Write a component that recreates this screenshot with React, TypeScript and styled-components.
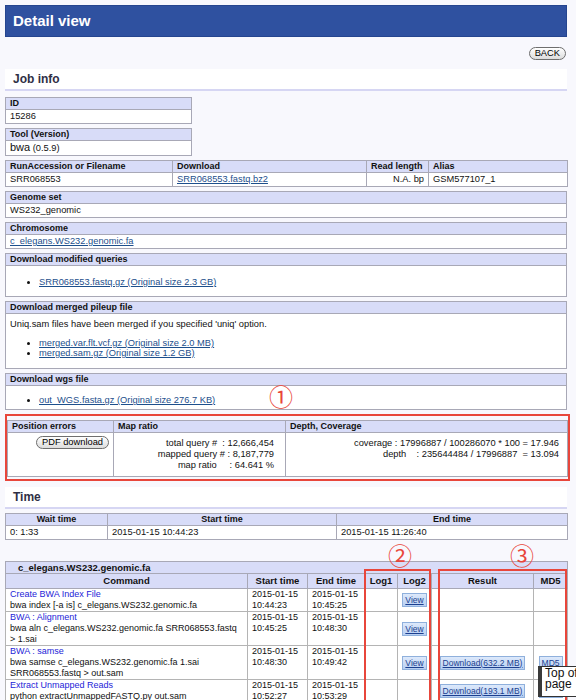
import styled, { createGlobalStyle } from 'styled-components';

const GlobalStyle = createGlobalStyle`
  html, body {
    margin: 0;
    padding: 0;
    overflow: hidden;
  }
  body {
    background: #f8f8fd;
    font-family: "Liberation Sans", Arial, Helvetica, sans-serif;
    color: #111;
  }
`;

type Step = {
  title: string;
  command: string;
  start: string;
  end: string;
  log2?: boolean;
  result?: string;
  md5?: boolean;
};

// 파이프라인 단계 (Command 테이블)
const steps: Step[] = [
  { title: 'Create BWA Index File', command: 'bwa index [-a is] c_elegans.WS232.genomic.fa', start: '10:44:23', end: '10:45:25', log2: true },
  { title: 'BWA : Alignment', command: 'bwa aln c_elegans.WS232.genomic.fa SRR068553.fastq > 1.sai', start: '10:45:25', end: '10:48:30', log2: true },
  { title: 'BWA : samse', command: 'bwa samse c_elegans.WS232.genomic.fa 1.sai SRR068553.fastq > out.sam', start: '10:48:30', end: '10:49:42', log2: true, result: '632.2 MB', md5: true },
  { title: 'Extract Unmapped Reads', command: 'python extractUnmappedFASTQ.py out.sam', start: '10:52:27', end: '10:53:29', result: '193.1 MB', md5: true },
];

const App = () => {
  return (
    <>
      <GlobalStyle />
      <Page>
        <TitleBar>Detail view</TitleBar>
        <BackRow>
          <PillButton>BACK</PillButton>
        </BackRow>

        <SectionBand $top={9} $bottom={6}>Job info</SectionBand>

        <InfoTable $width={187}>
          <tbody>
            <tr><HeadCell>ID</HeadCell></tr>
            <tr><Cell>15286</Cell></tr>
          </tbody>
        </InfoTable>

        <InfoTable $width={187}>
          <tbody>
            <tr><HeadCell>Tool (Version)</HeadCell></tr>
            <tr>
              <Cell>
                <ToolName>bwa</ToolName> (0.5.9)
              </Cell>
            </tr>
          </tbody>
        </InfoTable>

        <InfoTable>
          <colgroup>
            <col style={{ width: 167 }} />
            <col style={{ width: 194 }} />
            <col style={{ width: 62 }} />
            <col style={{ width: 139 }} />
          </colgroup>
          <tbody>
            <tr>
              <HeadCell>RunAccession or Filename</HeadCell>
              <HeadCell>Download</HeadCell>
              <HeadCell>Read length</HeadCell>
              <HeadCell>Alias</HeadCell>
            </tr>
            <tr>
              <Cell>SRR068553</Cell>
              <Cell><FileLink href="#">SRR068553.fastq.bz2</FileLink></Cell>
              <Cell $align="right">N.A. bp</Cell>
              <Cell>GSM577107_1</Cell>
            </tr>
          </tbody>
        </InfoTable>

        <InfoTable>
          <tbody>
            <tr><HeadCell>Genome set</HeadCell></tr>
            <tr><Cell>WS232_genomic</Cell></tr>
          </tbody>
        </InfoTable>

        <InfoTable>
          <tbody>
            <tr><HeadCell>Chromosome</HeadCell></tr>
            <tr><Cell><FileLink href="#">c_elegans.WS232.genomic.fa</FileLink></Cell></tr>
          </tbody>
        </InfoTable>

        <InfoTable>
          <tbody>
            <tr><HeadCell>Download modified queries</HeadCell></tr>
            <tr>
              <Cell>
                <LinkList $top={10} $bottom={8}>
                  <li><FileLink href="#">SRR068553.fastq.gz (Original size 2.3 GB)</FileLink></li>
                </LinkList>
              </Cell>
            </tr>
          </tbody>
        </InfoTable>

        <InfoTable>
          <tbody>
            <tr><HeadCell>Download merged pileup file</HeadCell></tr>
            <tr>
              <Cell>
                <Note>Uniq.sam files have been merged if you specified 'uniq' option.</Note>
                <LinkList $top={0} $bottom={9}>
                  <li><FileLink href="#">merged.var.flt.vcf.gz (Original size 2.0 MB)</FileLink></li>
                  <li><FileLink href="#">merged.sam.gz (Original size 1.2 GB)</FileLink></li>
                </LinkList>
              </Cell>
            </tr>
          </tbody>
        </InfoTable>

        <MarkedBlock>
          <InfoTable>
            <tbody>
              <tr><HeadCell>Download wgs file</HeadCell></tr>
              <tr>
                <Cell>
                  <LinkList $top={8} $bottom={3}>
                    <li><FileLink href="#">out_WGS.fasta.gz (Original size 276.7 KB)</FileLink></li>
                  </LinkList>
                </Cell>
              </tr>
            </tbody>
          </InfoTable>
          <Mark $left={263} $top={11}>①</Mark>
        </MarkedBlock>

        <Annotated>
          <InfoTable $flush>
            <colgroup>
              <col style={{ width: 106 }} />
              <col style={{ width: 172 }} />
              <col style={{ width: 282 }} />
            </colgroup>
            <tbody>
              <tr>
                <HeadCell>Position errors</HeadCell>
                <HeadCell>Map ratio</HeadCell>
                <HeadCell>Depth, Coverage</HeadCell>
              </tr>
              <tr>
                <StatCell $align="right">
                  <PillButton>PDF download</PillButton>
                </StatCell>
                <StatCell>
                  <Stats $right={7}>
                    {'total query #  : 12,666,454\nmapped query # : 8,187,779\nmap ratio     : 64.641 %'}
                  </Stats>
                </StatCell>
                <StatCell>
                  <Stats $right={4}>
                    {'coverage : 17996887 / 100286070 * 100 = 17.946\ndepth    : 235644484 / 17996887  = 13.094'}
                  </Stats>
                </StatCell>
              </tr>
            </tbody>
          </InfoTable>
        </Annotated>

        <SectionBand $top={6} $bottom={4}>Time</SectionBand>

        <InfoTable>
          <colgroup>
            <col style={{ width: 102 }} />
            <col style={{ width: 229 }} />
            <col style={{ width: 231 }} />
          </colgroup>
          <tbody>
            <tr>
              <HeadCell $align="center">Wait time</HeadCell>
              <HeadCell $align="center">Start time</HeadCell>
              <HeadCell $align="center">End time</HeadCell>
            </tr>
            <tr>
              <Cell>0: 1:33</Cell>
              <Cell>2015-01-15 10:44:23</Cell>
              <Cell>2015-01-15 11:26:40</Cell>
            </tr>
          </tbody>
        </InfoTable>

        <JobWrap>
          <JobTable>
            <colgroup>
              <col style={{ width: 242 }} />
              <col style={{ width: 60 }} />
              <col style={{ width: 57 }} />
              <col style={{ width: 33 }} />
              <col style={{ width: 34 }} />
              <col style={{ width: 102 }} />
              <col style={{ width: 34 }} />
            </colgroup>
            <tbody>
              <tr>
                <CaptionCell colSpan={7}>c_elegans.WS232.genomic.fa</CaptionCell>
              </tr>
              <tr>
                <ColHead>Command</ColHead>
                <ColHead>Start time</ColHead>
                <ColHead>End time</ColHead>
                <ColHead>Log1</ColHead>
                <ColHead>Log2</ColHead>
                <ColHead>Result</ColHead>
                <ColHead>MD5</ColHead>
              </tr>
              {steps.map((s) => (
                <tr key={s.title}>
                  <StepCell>
                    <StepTitle href="#">{s.title}</StepTitle>
                    {s.command}
                  </StepCell>
                  <StepCell>2015-01-15<br />{s.start}</StepCell>
                  <StepCell>2015-01-15<br />{s.end}</StepCell>
                  <ButtonCell />
                  <ButtonCell>{s.log2 && <SmallButton href="#">View</SmallButton>}</ButtonCell>
                  <ButtonCell>{s.result && <SmallButton href="#">Download({s.result})</SmallButton>}</ButtonCell>
                  <ButtonCell>{s.md5 && <SmallButton href="#">MD5</SmallButton>}</ButtonCell>
                </tr>
              ))}
            </tbody>
          </JobTable>
          <Mark $left={382} $top={-18}>②</Mark>
          <Mark $left={504} $top={-18}>③</Mark>
          <RedFrame $left={359} $width={67} />
          <RedFrame $left={433} $width={129} />
        </JobWrap>
      </Page>
      <Tooltip>Top of page</Tooltip>
    </>
  );
};

const Page = styled.div`
  padding: 5px 9px 0 5px;
`;

const TitleBar = styled.h1`
  margin: 0;
  height: 32px;
  box-sizing: border-box;
  padding-left: 7px;
  background: #2f51a0;
  border: 1px solid #25458f;
  color: #fff;
  font-size: 15px;
  font-weight: bold;
  line-height: 30px;
`;

const BackRow = styled.div`
  display: flex;
  justify-content: flex-end;
  padding: 10px 1px 0 0;
`;

const PillButton = styled.button`
  height: 13px;
  padding: 0 5px;
  border: 1px solid #6e6e6e;
  border-radius: 7px;
  background: linear-gradient(#ffffff, #dcdcdc);
  color: #000;
  font-family: inherit;
  font-size: 9.3px;
  line-height: 11px;
`;

const SectionBand = styled.h2<{ $top: number; $bottom: number }>`
  margin: ${(p) => p.$top}px 0 ${(p) => p.$bottom}px;
  height: 20px;
  padding-left: 8px;
  background: #fff;
  border-bottom: 2px solid #d6d6f3;
  color: #2f2f45;
  font-size: 12px;
  font-weight: bold;
  line-height: 20px;
`;

const InfoTable = styled.table<{ $width?: number; $flush?: boolean }>`
  width: ${(p) => (p.$width ? `${p.$width}px` : '100%')};
  margin-bottom: ${(p) => (p.$flush ? 0 : 4)}px;
  border-collapse: collapse;
  table-layout: fixed;
  background: #fff;
  font-size: 9.3px;
`;

const HeadCell = styled.th<{ $align?: 'left' | 'center' | 'right' }>`
  height: 11px;
  padding: 0 4px;
  background: #d8dcf8;
  border: 1px solid #a8a8b6;
  color: #111;
  font-size: 9px;
  font-weight: bold;
  line-height: 11px;
  text-align: ${(p) => p.$align ?? 'left'};
  white-space: nowrap;
`;

const Cell = styled.td<{ $align?: 'left' | 'right' }>`
  padding: 1px 4px;
  border: 1px solid #a8a8b6;
  line-height: 11px;
  text-align: ${(p) => p.$align ?? 'left'};
  vertical-align: top;
`;

const ToolName = styled.span`
  font-size: 11px;
`;

const FileLink = styled.a`
  color: #1d4f8c;
  text-decoration: underline;
`;

const LinkList = styled.ul<{ $top: number; $bottom: number }>`
  margin: ${(p) => p.$top}px 0 ${(p) => p.$bottom}px;
  padding-left: 29px;
  line-height: 10px;
`;

const Note = styled.p`
  margin: 4px 0 8px;
`;

const MarkedBlock = styled.div`
  position: relative;
`;

const Mark = styled.span<{ $left: number; $top: number }>`
  position: absolute;
  left: ${(p) => p.$left}px;
  top: ${(p) => p.$top}px;
  width: 26px;
  color: #e8463b;
  font-family: "Noto Sans CJK JP", "DejaVu Sans", sans-serif;
  font-size: 24px;
  line-height: 24px;
  text-align: center;
`;

const Annotated = styled.div`
  margin: 3px -3px 0 0;
  padding: 4px 1px 2px 0;
  border: 2px solid #e8463b;
`;

const StatCell = styled.td<{ $align?: 'left' | 'right' }>`
  height: 40px;
  padding: 3px 4px 0;
  border: 1px solid #a8a8b6;
  text-align: ${(p) => p.$align ?? 'left'};
  vertical-align: top;
`;

const Stats = styled.div<{ $right: number }>`
  padding: 2px ${(p) => p.$right}px 0 0;
  line-height: 11px;
  text-align: right;
  white-space: pre;
`;

const JobWrap = styled.div`
  position: relative;
  margin-top: 21px;
`;

const JobTable = styled.table`
  width: 100%;
  border-collapse: collapse;
  table-layout: fixed;
  background: #fff;
  font-size: 9px;
`;

const CaptionCell = styled.th`
  height: 11px;
  padding: 0 0 0 12px;
  background: #d8dcf8;
  border: 1px solid #a8a8b6;
  font-size: 9.5px;
  line-height: 11px;
  text-align: left;
`;

const ColHead = styled.th`
  height: 14px;
  padding: 0;
  background: #d8dcf8;
  border: 1px solid #a8a8b6;
  font-size: 9.5px;
  line-height: 14px;
  text-align: center;
`;

const StepCell = styled.td`
  padding: 0 3px 0 4px;
  border: 1px solid #b4b4b4;
  line-height: 11px;
  vertical-align: top;
`;

const ButtonCell = styled.td`
  padding: 0;
  border: 1px solid #b4b4b4;
  text-align: center;
  vertical-align: middle;
`;

const StepTitle = styled.a`
  display: block;
  color: #2424d8;
  text-decoration: none;
`;

const SmallButton = styled.a`
  display: inline-block;
  padding: 0 2px;
  border: 1px solid #8fb0dc;
  background: linear-gradient(#dde9fb, #b8cff2);
  color: #1b3f8f;
  font-size: 8.5px;
  line-height: 12px;
  text-decoration: underline;
`;

const RedFrame = styled.div<{ $left: number; $width: number }>`
  position: absolute;
  top: 8px;
  left: ${(p) => p.$left}px;
  width: ${(p) => p.$width}px;
  height: 200px;
  box-sizing: border-box;
  border: 2px solid #e8463b;
  pointer-events: none;
`;

const Tooltip = styled.div`
  position: fixed;
  left: 538px;
  top: 666px;
  width: 46px;
  padding: 1px 0 6px 3px;
  background: #fff;
  border: 1px solid #333;
  border-left: 4px solid #3a3a3a;
  color: #111;
  font-size: 12px;
  line-height: 11px;
`;

export default App;
